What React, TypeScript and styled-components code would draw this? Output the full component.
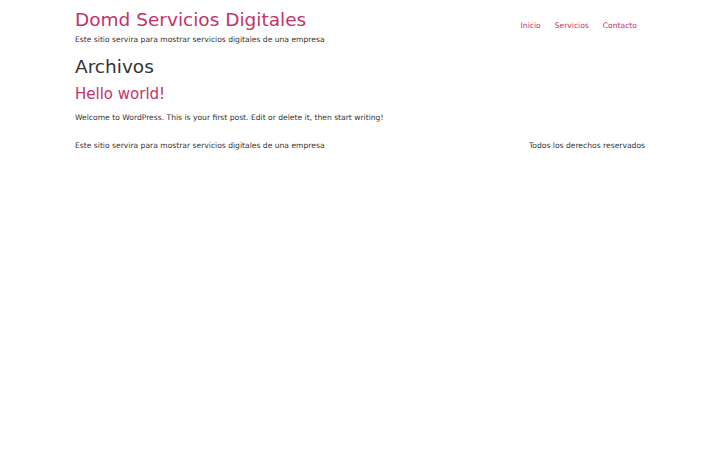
import styled, { createGlobalStyle } from "styled-components";

const GlobalStyle = createGlobalStyle`
  body {
    margin: 0;
    background: #fff;
    font-family: "DejaVu Sans", sans-serif;
    color: #333;
  }
`;

const Page = styled.div`
  width: 570px;
  margin: 0 auto;
`;

const Header = styled.header`
  display: flex;
  justify-content: space-between;
  align-items: flex-start;
  padding-top: 7px;
`;

const Brand = styled.div`
  display: flex;
  flex-direction: column;
`;

const SiteTitle = styled.a`
  font-size: 18.5px;
  line-height: 26px;
  color: #c2336b;
  text-decoration: none;
`;

const Tagline = styled.p`
  margin: 1px 0 0;
  font-size: 7.6px;
  line-height: 12px;
`;

const Menu = styled.nav`
  display: flex;
  padding-top: 13px;
  padding-right: 8px;
`;

const MenuLink = styled.a`
  font-size: 7.6px;
  line-height: 12px;
  color: #c2336b;
  text-decoration: none;
  padding: 0 7px;

  &:last-child {
    padding-right: 0;
  }
`;

const ArchiveTitle = styled.h1`
  margin: 8px 0 0;
  font-size: 18.5px;
  font-weight: normal;
  line-height: 26px;
`;

const PostTitle = styled.h2`
  margin: 3px 0 0;
  font-size: 15px;
  font-weight: normal;
  line-height: 22px;
  color: #c2336b;
`;

const Excerpt = styled.p`
  margin: 7px 0 0;
  font-size: 7.6px;
  line-height: 12px;
`;

const Footer = styled.footer`
  display: flex;
  justify-content: space-between;
  margin-top: 16px;
  font-size: 7.6px;
  line-height: 12px;
`;

function App() {
  return (
    <>
      <GlobalStyle />
      <Page>
        <Header>
          <Brand>
            <SiteTitle href="#">Domd Servicios Digitales</SiteTitle>
            <Tagline>Este sitio servira para mostrar servicios digitales de una empresa</Tagline>
          </Brand>
          <Menu>
            <MenuLink href="#">Inicio</MenuLink>
            <MenuLink href="#">Servicios</MenuLink>
            <MenuLink href="#">Contacto</MenuLink>
          </Menu>
        </Header>
        <main>
          <ArchiveTitle>Archivos</ArchiveTitle>
          <article>
            <PostTitle>Hello world!</PostTitle>
            <Excerpt>Welcome to WordPress. This is your first post. Edit or delete it, then start writing!</Excerpt>
          </article>
        </main>
        <Footer>
          <span>Este sitio servira para mostrar servicios digitales de una empresa</span>
          <span>Todos los derechos reservados</span>
        </Footer>
      </Page>
    </>
  );
}

export default App;
